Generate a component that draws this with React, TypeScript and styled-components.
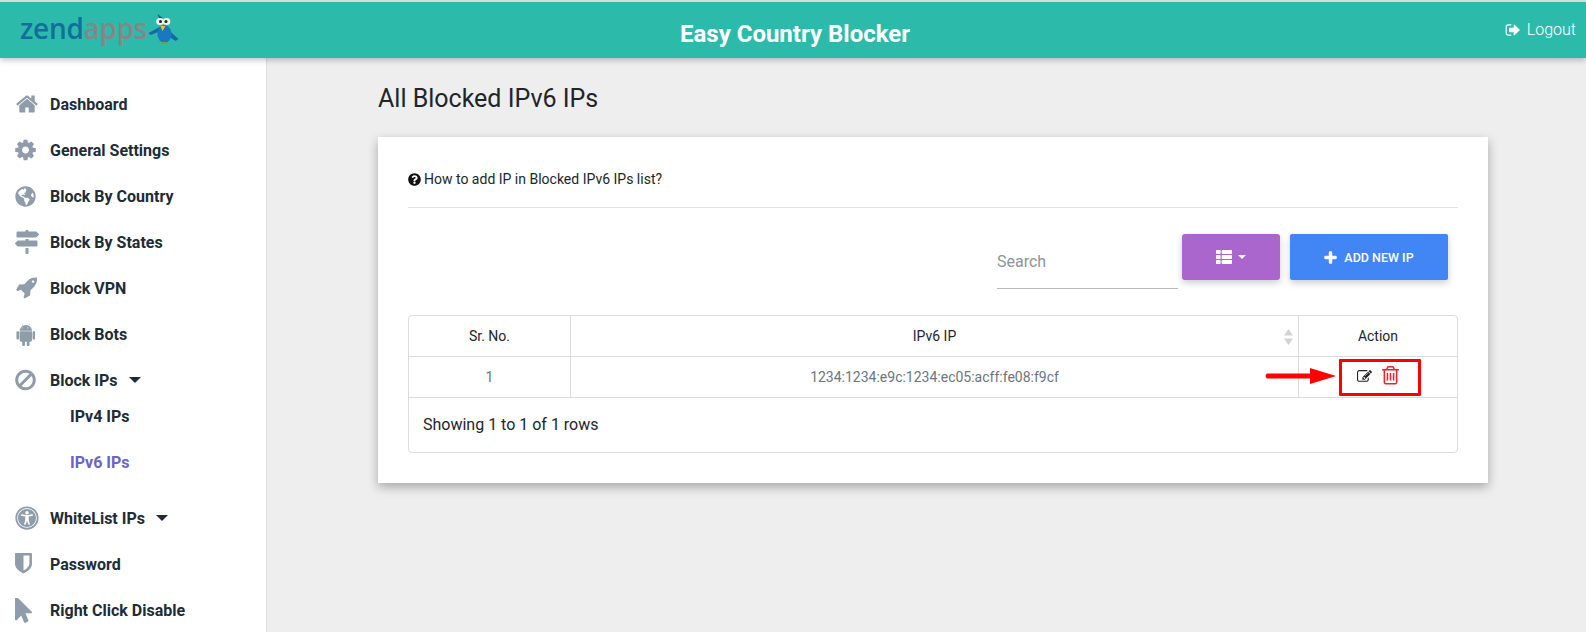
import React from "react";
import styled, { createGlobalStyle } from "styled-components";
import { FaGlobeAmericas, FaMapSigns, FaPlus, FaQuestionCircle, FaThList, FaUniversalAccess } from "react-icons/fa";

const GlobalStyle = createGlobalStyle`
  html, body {
    margin: 0;
    height: 632px;
    overflow: hidden;
    background: #eeeeee;
    font-family: Roboto, "Liberation Sans", sans-serif;
    color: #212529;
  }
  * {
    box-sizing: border-box;
  }
`;

const Header = styled.header`
  display: flex;
  align-items: center;
  justify-content: space-between;
  position: relative;
  z-index: 2;
  height: 58px;
  padding: 0 10px 0 20px;
  background: #2cbbab;
  border-top: 2px solid #d5dedc;
  box-shadow: 0 2px 6px rgba(0, 0, 0, 0.25);
`;

const Logo = styled.div`
  display: flex;
  align-items: center;
  width: 194px;
  margin-top: -4px;
  font-family: "Open Sans", sans-serif;
  font-size: 28px;
  font-weight: 600;
  letter-spacing: -0.3px;
  line-height: 1;
`;

const LogoDark = styled.span`
  color: #146e9c;
`;

const LogoGrey = styled.span`
  color: #868686;
`;

const HeaderTitle = styled.h1`
  margin: 7px 0 0;
  font-size: 24px;
  font-weight: 700;
  color: #fff;
`;

const Logout = styled.div`
  display: flex;
  align-items: center;
  justify-content: flex-end;
  gap: 7px;
  width: 200px;
  margin-top: -1px;
  font-size: 16px;
  font-weight: 300;
  color: #fff;
`;

const Body = styled.div`
  display: flex;
  height: 574px;
`;

const Sidebar = styled.nav`
  flex: none;
  width: 267px;
  padding-top: 23px;
  overflow: hidden;
  background: #fff;
  border-right: 1px solid #dedede;
`;

const NavItem = styled.div`
  display: flex;
  align-items: center;
  height: 46px;
  padding-left: 15px;
  font-size: 16px;
  font-weight: 700;
  color: #212b36;
`;

const NavIcon = styled.span`
  display: flex;
  flex: none;
  align-items: center;
  width: 35px;
  color: #8f9ca9;
`;

const SubNav = styled.div`
  margin: -10px 0 10px;
`;

const SubItem = styled.div<{ $active?: boolean }>`
  display: flex;
  align-items: center;
  height: 46px;
  padding-left: 70px;
  font-size: 16px;
  font-weight: 700;
  color: ${(p) => (p.$active ? "#6a63c9" : "#212b36")};
`;

const Caret = styled.span`
  width: 0;
  height: 0;
  margin-left: 11px;
  border-top: 6px solid #212b36;
  border-left: 6px solid transparent;
  border-right: 6px solid transparent;
`;

const Main = styled.main`
  flex: 1;
  padding: 24px 98px 0 111px;
`;

const PageTitle = styled.h2`
  margin: 0 0 21px;
  height: 34px;
  font-size: 25px;
  line-height: 34px;
  font-weight: 400;
  color: #212529;
`;

const Card = styled.section`
  height: 346px;
  padding: 30px;
  background: #fff;
  box-shadow: 0 4px 10px rgba(0, 0, 0, 0.3);
`;

const HelpLine = styled.div`
  display: flex;
  align-items: center;
  gap: 3px;
  height: 41px;
  padding-bottom: 16px;
  font-size: 14px;
  color: #212529;
  border-bottom: 1px solid #e2e2e2;
`;

const Toolbar = styled.div`
  display: flex;
  justify-content: flex-end;
  gap: 10px;
  margin-top: 26px;
  padding-right: 10px;
`;

const SearchField = styled.div`
  width: 181px;
  height: 55px;
  margin-right: -6px;
  padding-top: 18px;
  font-size: 16px;
  color: #8b949c;
  border-bottom: 1px solid #b9b9b9;
`;

const ColumnsButton = styled.button`
  display: flex;
  align-items: center;
  justify-content: center;
  gap: 6px;
  width: 98px;
  height: 46px;
  color: #fff;
  background: #aa66cc;
  border: none;
  border-radius: 3px;
  box-shadow: 0 3px 7px rgba(0, 0, 0, 0.2);
`;

const SmallCaret = styled.span`
  width: 0;
  height: 0;
  border-top: 4px solid #fff;
  border-left: 4px solid transparent;
  border-right: 4px solid transparent;
`;

const AddButton = styled.button`
  display: flex;
  align-items: center;
  justify-content: center;
  gap: 7px;
  width: 158px;
  height: 46px;
  font-family: inherit;
  font-size: 12.5px;
  font-weight: 500;
  color: #fff;
  background: #4285f4;
  border: none;
  border-radius: 2px;
  box-shadow: 0 3px 7px rgba(0, 0, 0, 0.2);
`;

const TableFrame = styled.div`
  margin-top: 26px;
  height: 138px;
  border: 1px solid #dcdcdc;
  border-radius: 4px;
`;

const Row = styled.div`
  display: grid;
  grid-template-columns: 161px 1fr 159px;
  height: 41px;
  border-bottom: 1px solid #dcdcdc;
`;

const Cell = styled.div<{ $muted?: boolean }>`
  position: relative;
  display: flex;
  align-items: center;
  justify-content: center;
  font-size: 14px;
  color: ${(p) => (p.$muted ? "#6c757d" : "#212529")};
  & + & {
    border-left: 1px solid #dcdcdc;
  }
`;

const SortMark = styled.svg`
  position: absolute;
  right: 5px;
  top: 13px;
`;

const ActionIcons = styled.div`
  display: flex;
  align-items: center;
  gap: 10px;
  margin: -2px 0 0 -1px;
  color: #222;
`;

const Trash = styled.span`
  display: flex;
  color: #f5222d;
`;

const Highlight = styled.div`
  position: absolute;
  left: 40px;
  top: 2px;
  width: 82px;
  height: 37px;
  border: 3px solid #ff0000;
  border-radius: 1px;
`;

const Arrow = styled.svg`
  position: absolute;
  left: -35px;
  top: 11px;
`;

const Footer = styled.div`
  padding: 17px 14px;
  font-size: 16px;
  line-height: 20px;
  color: #212529;
`;

const Glyph = styled.svg`
  display: block;
  fill: currentColor;
`;

// font-awesome 4 outlines, the react-icons set only has the newer ones
const paths = {
  home: "M1472 992v480q0 26-19 45t-45 19h-384v-384h-256v384h-384q-26 0-45-19t-19-45v-480q0-1 .5-3t.5-3l575-474 575 474q1 2 1 6zm223-69l-62 74q-8 9-21 11h-3q-13 0-21-7l-692-577-692 577q-12 8-24 7-13-2-21-11l-62-74q-8-10-7-23.5t11-21.5l719-599q32-26 76-26t76 26l244 204v-195q0-14 9-23t23-9h192q14 0 23 9t9 23v408l219 182q10 8 11 21.5t-7 23.5z",
  cog: "M1024 896q0-106-75-181t-181-75-181 75-75 181 75 181 181 75 181-75 75-181zm512-109v222q0 12-8 23t-20 13l-185 28q-19 54-39 91 35 50 107 138 10 12 10 25t-9 23q-27 37-99 108t-94 71q-12 0-26-9l-138-108q-44 23-91 38-16 136-29 186-7 28-36 28h-222q-14 0-24.5-8.5t-11.5-21.5l-28-184q-49-16-90-37l-141 107q-10 9-25 9-14 0-25-11-126-114-165-168-7-10-7-23 0-12 8-23 15-21 51-66.5t54-70.5q-27-50-41-99l-183-27q-13-2-21-12.5t-8-23.5v-222q0-12 8-23t19-13l186-28q14-46 39-92-40-57-107-138-10-12-10-24 0-10 9-23 26-36 98.5-107.5t94.5-71.5q13 0 26 10l138 107q44-23 91-38 16-136 29-186 7-28 36-28h222q14 0 24.5 8.5t11.5 21.5l28 184q49 16 90 37l142-107q9-9 24-9 13 0 25 10 129 119 165 170 7 8 7 22 0 12-8 23-15 21-51 66.5t-54 70.5q26 50 41 98l183 28q13 2 21 12.5t8 23.5z",
  rocket: "M1504 352q0-40-28-68t-68-28-68 28-28 68 28 68 68 28 68-28 28-68zm224-288q0 249-75.5 430.5t-253.5 360.5q-81 80-195 176l-20 379q-2 16-16 26l-384 224q-7 4-16 4-12 0-23-9l-64-64q-13-14-8-32l85-276-281-281-276 85q-3 1-9 1-14 0-23-9l-64-64q-17-19-5-39l224-384q10-14 26-16l379-20q96-114 176-195 188-187 358-258t431-71q14 0 24 9.5t10 22.5z",
  android: "M493 483q16 0 27.5-11.5t11.5-27.5-11.5-27.5-27.5-11.5-27 11.5-11 27.5 11 27.5 27 11.5zm422 0q16 0 27-11.5t11-27.5-11-27.5-27-11.5-27.5 11.5-11.5 27.5 11.5 27.5 27.5 11.5zm-749 191q42 0 72 30t30 72v430q0 43-29.5 73t-72.5 30-73-30-30-73v-430q0-42 30-72t73-30zm1060 19v666q0 46-32 78t-77 32h-75v227q0 43-30 73t-73 30-73-30-30-73v-227h-138v227q0 43-30 73t-73 30q-42 0-72-30t-30-73l-1-227h-74q-46 0-78-32t-32-78v-666h918zm-232-405q107 55 171 153.5t64 215.5h-925q0-117 64-215.5t172-153.5l-71-131q-7-13 5-20 13-6 20 6l72 132q95-42 201-42t201 42l72-132q7-12 20-6 12 7 5 20zm477 488v430q0 43-30 73t-73 30q-42 0-72-30t-30-73v-430q0-43 30-72.5t72-29.5q43 0 73 29.5t30 72.5z",
  ban: "M1312 893q0-161-87-295l-754 753q137 89 297 89 111 0 211.5-43.5t173.5-116.5 116-174.5 43-212.5zm-999 299l755-754q-135-91-300-91-148 0-273 73t-198 199-73 274q0 162 89 299zm1223-299q0 157-61 300t-163.5 246-245 164-298.5 61-298.5-61-245-164-163.5-246-61-300 61-299.5 163.5-245.5 245-164 298.5-61 298.5 61 245 164 163.5 245.5 61 299.5z",
  shield: "M1344 960v-640h-448v1137q119-63 213-137 235-184 235-360zm192-768v768q0 86-33.5 170.5t-83 150-118 127.5-126.5 103-121 77.5-89.5 49.5-42.5 20q-12 6-26 6t-26-6q-16-7-42.5-20t-89.5-49.5-121-77.5-126.5-103-118-127.5-83-150-33.5-170.5v-768q0-26 19-45t45-19h1152q26 0 45 19t19 45z",
  pointer: "M1389 1043q31 30 14 69-17 40-59 40h-382l201 476q10 25 0 49t-34 35l-177 75q-25 10-49 0t-35-34l-191-452-312 312q-19 19-45 19-12 0-24-5-40-17-40-59v-1504q0-42 40-59 12-5 24-5 27 0 45 19z",
  signOut: "M704 1440q0 4 1 20t.5 26.5-3 23.5-10 19.5-20.5 6.5h-320q-119 0-203.5-84.5t-84.5-203.5v-704q0-119 84.5-203.5t203.5-84.5h320q13 0 22.5 9.5t9.5 22.5q0 4 1 20t.5 26.5-3 23.5-10 19.5-20.5 6.5h-320q-66 0-113 47t-47 113v704q0 66 47 113t113 47h312l11.5 1 11.5 3 8 5.5 7 9 2 13.5zm928-544q0 26-19 45l-544 544q-19 19-45 19t-45-19-19-45v-288h-448q-26 0-45-19t-19-45v-384q0-26 19-45t45-19h448v-288q0-26 19-45t45-19 45 19l544 544q19 19 19 45z",
  edit: "M888 1184l116-116-152-152-116 116v56h96v96h56zm440-720q-16-16-33 1l-350 350q-17 17-1 33t33-1l350-350q17-17 1-33zm80 594v190q0 119-84.5 203.5t-203.5 84.5h-832q-119 0-203.5-84.5t-84.5-203.5v-832q0-119 84.5-203.5t203.5-84.5h832q63 0 117 25 15 7 18 23 3 17-9 29l-49 49q-14 14-32 8-23-6-45-6h-832q-66 0-113 47t-47 113v832q0 66 47 113t113 47h832q66 0 113-47t47-113v-126q0-13 9-22l64-64q15-15 35-7t20 29zm-96-738l288 288-672 672h-288v-288zm444 132l-92 92-288-288 92-92q28-28 68-28t68 28l152 152q28 28 28 68t-28 68z",
  trash: "M512 736v576q0 14-9 23t-23 9h-64q-14 0-23-9t-9-23v-576q0-14 9-23t23-9h64q14 0 23 9t9 23zm256 0v576q0 14-9 23t-23 9h-64q-14 0-23-9t-9-23v-576q0-14 9-23t23-9h64q14 0 23 9t9 23zm256 0v576q0 14-9 23t-23 9h-64q-14 0-23-9t-9-23v-576q0-14 9-23t23-9h64q14 0 23 9t9 23zm128 724v-948h-896v948q0 22 7 40.5t14.5 27 10.5 8.5h832q3 0 10.5-8.5t14.5-27 7-40.5zm-672-1076h448l-48-117q-7-9-17-11h-317q-10 2-17 11zm928 32v64q0 14-9 23t-23 9h-96v948q0 83-47 143.5t-113 60.5h-832q-66 0-113-58.5t-47-141.5v-952h-96q-14 0-23-9t-9-23v-64q0-14 9-23t23-9h309l70-167q15-37 54-63t79-26h320q40 0 79 26t54 63l70 167h309q14 0 23 9t9 23z",
};

const Fa4: React.FC<{ name: keyof typeof paths; viewBox: string; width: number; height: number }> = ({
  name,
  viewBox,
  width,
  height,
}) => (
  <Glyph width={width} height={height} viewBox={viewBox}>
    <path d={paths[name]} />
  </Glyph>
);

const Bird = () => (
  <svg width="31" height="32" viewBox="0 0 30 32" style={{ margin: "2px 0 0 1px" }}>
    <path d="M0 20 L13 13 L15 17 L2 22 Z" fill="#1669a8" />
    <path d="M20 17 L30 26 L27 28 L18 22 Z" fill="#1669a8" />
    <ellipse cx="16" cy="21" rx="7" ry="9" fill="#1a78c2" />
    <path d="M9 1 L11 6 L14 5 Z" fill="#12507f" />
    <ellipse cx="11.5" cy="8.5" rx="3.8" ry="3.6" fill="#f2f2e6" />
    <ellipse cx="18" cy="8.5" rx="3.8" ry="3.6" fill="#f2f2e6" />
    <circle cx="12" cy="8.5" r="1.5" fill="#222" />
    <circle cx="17.5" cy="8.5" r="1.5" fill="#222" />
    <path d="M12 13 L17 13 L14 18 Z" fill="#f2c81e" />
    <path d="M12 29 L20 29 L18 31 L14 31 Z" fill="#7aa03c" />
  </svg>
);

const navTop = [
  { label: "Dashboard", icon: <Fa4 name="home" viewBox="0 0 1792 1792" width={24} height={24} /> },
  { label: "General Settings", icon: <Fa4 name="cog" viewBox="0 0 1536 1792" width={21} height={24} /> },
  { label: "Block By Country", icon: <FaGlobeAmericas size={21} /> },
  { label: "Block By States", icon: <FaMapSigns size={24} /> },
  { label: "Block VPN", icon: <Fa4 name="rocket" viewBox="0 0 1792 1792" width={23} height={23} /> },
  { label: "Block Bots", icon: <Fa4 name="android" viewBox="0 0 1408 1792" width={20} height={24} /> },
];

const App: React.FC = () => {
  return (
    <>
      <GlobalStyle />
      <Header>
        <Logo>
          <LogoDark>zend</LogoDark>
          <LogoGrey>apps</LogoGrey>
          <Bird />
        </Logo>
        <HeaderTitle>Easy Country Blocker</HeaderTitle>
        <Logout>
          <Fa4 name="signOut" viewBox="0 0 1664 1792" width={15} height={16} />
          Logout
        </Logout>
      </Header>
      <Body>
        <Sidebar>
          {navTop.map((item) => (
            <NavItem key={item.label}>
              <NavIcon>{item.icon}</NavIcon>
              {item.label}
            </NavItem>
          ))}
          <NavItem>
            <NavIcon>
              <Fa4 name="ban" viewBox="0 0 1536 1792" width={21} height={24} />
            </NavIcon>
            Block IPs
            <Caret />
          </NavItem>
          <SubNav>
            <SubItem>IPv4 IPs</SubItem>
            <SubItem $active>IPv6 IPs</SubItem>
          </SubNav>
          <NavItem>
            <NavIcon>
              <FaUniversalAccess size={24} />
            </NavIcon>
            WhiteList IPs
            <Caret />
          </NavItem>
          <NavItem>
            <NavIcon>
              <Fa4 name="shield" viewBox="256 128 1280 1664" width={17} height={22} />
            </NavIcon>
            Password
          </NavItem>
          <NavItem>
            <NavIcon>
              <Fa4 name="pointer" viewBox="256 128 1152 1664" width={17} height={25} />
            </NavIcon>
            Right Click Disable
          </NavItem>
        </Sidebar>
        <Main>
          <PageTitle>All Blocked IPv6 IPs</PageTitle>
          <Card>
            <HelpLine>
              <FaQuestionCircle size={13} color="#111" />
              How to add IP in Blocked IPv6 IPs list?
            </HelpLine>
            <Toolbar>
              <SearchField>Search</SearchField>
              <ColumnsButton>
                <FaThList size={16} />
                <SmallCaret />
              </ColumnsButton>
              <AddButton>
                <FaPlus size={13} stroke="currentColor" strokeWidth={40} />
                ADD NEW IP
              </AddButton>
            </Toolbar>
            <TableFrame>
              <Row>
                <Cell>Sr. No.</Cell>
                <Cell>
                  IPv6 IP
                  <SortMark width="9" height="16" viewBox="0 0 9 16">
                    <path d="M4.5 0 L9 6.5 H0 Z M4.5 16 L0 9.5 H9 Z" fill="#d3d3d3" />
                  </SortMark>
                </Cell>
                <Cell>Action</Cell>
              </Row>
              <Row>
                <Cell $muted>1</Cell>
                <Cell $muted>1234:1234:e9c:1234:ec05:acff:fe08:f9cf</Cell>
                <Cell>
                  <ActionIcons>
                    <Fa4 name="edit" viewBox="0 0 1792 1792" width={15} height={15} />
                    <Trash>
                      <Fa4 name="trash" viewBox="0 128 1408 1664" width={17} height={20} />
                    </Trash>
                  </ActionIcons>
                  <Highlight />
                  <Arrow width="72" height="16" viewBox="0 0 72 16">
                    <path d="M3 5.5 H46 V0 L72 8 L46 16 V10.5 H3 Q0 8 3 5.5 Z" fill="#ff0000" />
                  </Arrow>
                </Cell>
              </Row>
              <Footer>Showing 1 to 1 of 1 rows</Footer>
            </TableFrame>
          </Card>
        </Main>
      </Body>
    </>
  );
};

export default App;
